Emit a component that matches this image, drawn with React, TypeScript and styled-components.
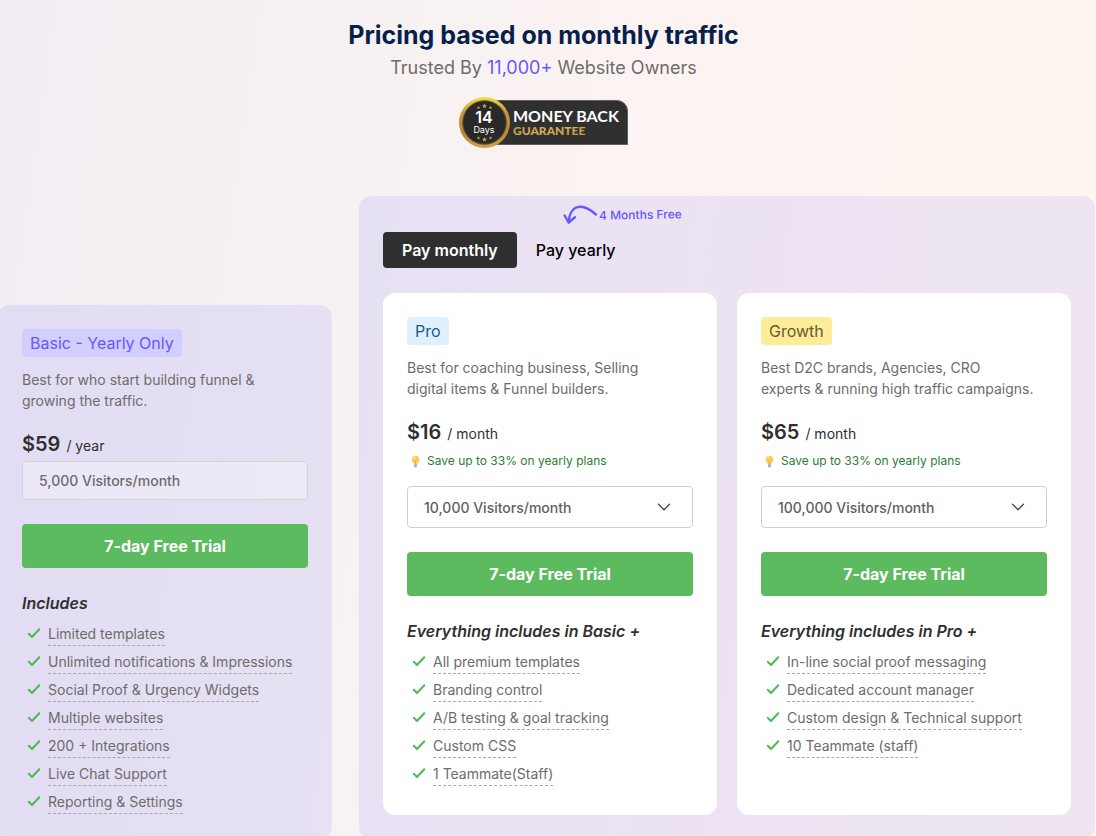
import React, { useState } from "react";
import styled, { createGlobalStyle } from "styled-components";

const GlobalStyle = createGlobalStyle`
  *, *::before, *::after { box-sizing: border-box; }
  body {
    margin: 0;
    font-family: Inter, "Liberation Sans", sans-serif;
    color: #2f2f2f;
    background: #fdf4f1;
  }
  h1, h2, h3, p, ul { margin: 0; padding: 0; }
  button, input, select { font-family: inherit; }
`;

const Page = styled.main`
  min-height: 100vh;
  overflow: hidden;
  background: linear-gradient(98deg, #f1edf3 0%, #f5f0f2 25%, #fbf3f2 48%, #fef4f1 72%, #fff7f0 100%);
`;

const Header = styled.header`
  display: flex;
  flex-direction: column;
  align-items: center;
  padding: 17px 9px 47px 0;
`;

const Title = styled.h1`
  font-size: 25px;
  line-height: 36px;
  font-weight: 700;
  color: #081f4b;
`;

const Subtitle = styled.p`
  margin: 3px 0 17px;
  font-size: 18px;
  line-height: 24px;
  color: #6c6c6c;
`;

const Accent = styled.span`
  color: #6658ff;
`;

const Plans = styled.section`
  display: grid;
  grid-template-columns: 334fr 736fr;
  gap: 27px;
  align-items: end;
  margin: 0 1px 0 -2px;
`;

const tint = "rgba(100, 94, 252, 0.11)";

const BasicPanel = styled.article`
  padding: 24px 24px 25px;
  border-radius: 12px;
  background: ${tint};
`;

const PaidPanel = styled.div`
  padding: 0 24px 24px;
  border-radius: 12px;
  background: ${tint};
`;

const Promo = styled.div`
  display: flex;
  height: 36px;
  padding: 8px 0 0 180px;
  color: #6658ff;
`;

const PromoText = styled.span`
  height: 22px;
  font-size: 12px;
  line-height: 22px;
  font-weight: 500;
  transform: rotate(-1deg);
`;

const Toggle = styled.div`
  display: flex;
  margin-bottom: 25px;
`;

const ToggleButton = styled.button<{ $active: boolean }>`
  height: 36px;
  padding: 0 19px;
  border: 0;
  border-radius: 4px;
  font-size: 16px;
  font-weight: ${(p) => (p.$active ? 600 : 500)};
  color: ${(p) => (p.$active ? "#ffffff" : "#000000")};
  background: ${(p) => (p.$active ? "#2f2f2f" : "transparent")};
`;

const Cards = styled.div`
  display: grid;
  grid-template-columns: 1fr 1fr;
  gap: 20px;
`;

const Card = styled.article`
  padding: 24px 24px 29px;
  border-radius: 12px;
  background: #ffffff;
`;

const Badge = styled.h2<{ $bg: string; $fg: string }>`
  width: fit-content;
  padding: 0 8px;
  border-radius: 4px;
  font-size: 16px;
  line-height: 28px;
  font-weight: 400;
  color: ${(p) => p.$fg};
  background: ${(p) => p.$bg};
`;

const Description = styled.p`
  margin: 12px 0 19px;
  font-size: 14px;
  line-height: 21px;
  color: #6c6c6c;
`;

const Price = styled.p`
  margin-bottom: 1px;
  font-size: 20px;
  line-height: 28px;
  font-weight: 600;
`;

const Period = styled.span`
  margin-left: 6px;
  font-size: 14px;
  font-weight: 400;
`;

const Saving = styled.p`
  display: flex;
  align-items: center;
  gap: 6px;
  margin-bottom: 13px;
  padding-left: 3px;
  font-size: 12px;
  line-height: 24px;
  color: #2e7d32;
`;

const Field = styled.input`
  display: block;
  width: 100%;
  height: 39px;
  padding: 0 16px;
  border: 1px solid #d3d3d3;
  border-radius: 4px;
  font-size: 14px;
  font-weight: 500;
  color: #6c6c6c;
  background: rgba(255, 255, 255, 0.3);
`;

const SelectWrap = styled.div`
  position: relative;
  color: #4a4a4a;

  svg {
    position: absolute;
    top: 13px;
    right: 21px;
    pointer-events: none;
  }
`;

const Select = styled.select`
  display: block;
  width: 100%;
  height: 42px;
  padding: 0 16px;
  border: 1px solid #cfcfcf;
  border-radius: 4px;
  appearance: none;
  font-size: 14px;
  font-weight: 500;
  color: #606060;
  background: #ffffff;
`;

const TrialButton = styled.button`
  display: block;
  width: 100%;
  height: 44px;
  margin: 24px 0;
  border: 0;
  border-radius: 4px;
  font-size: 16px;
  font-weight: 700;
  color: #ffffff;
  background: #5cbb5e;
`;

const IncludesTitle = styled.h3`
  margin-bottom: 9px;
  font-size: 16px;
  line-height: 22px;
  font-weight: 600;
  font-style: italic;
`;

const FeatureList = styled.ul`
  display: grid;
  gap: 5px;
  padding-left: 5px;
  list-style: none;
`;

const Feature = styled.li`
  display: flex;
  gap: 7px;
  height: 23px;
`;

const FeatureText = styled.span`
  border-bottom: 1px dashed #a9a9a9;
  font-size: 14px;
  line-height: 21px;
  color: #6c6c6c;
`;

const CheckIcon = () => (
  <svg width="14" height="21" viewBox="0 0 14 21" fill="none" aria-hidden="true">
    <path d="M1.8 10.8 5 14 12.3 6.3" stroke="#50b955" strokeWidth="2" strokeLinecap="round" strokeLinejoin="round" />
  </svg>
);

const ChevronIcon = () => (
  <svg width="16" height="16" viewBox="0 0 16 16" fill="none" aria-hidden="true">
    <path d="m2.500 5.300 5.500 5.400 5.500-5.400" stroke="currentColor" strokeWidth="1.400" strokeLinecap="round" strokeLinejoin="round" />
  </svg>
);

const BulbIcon = () => (
  <svg width="11" height="13" viewBox="0 0 11 13" aria-hidden="true">
    <path d="M5.500.8C3.300.8 1.700 2.400 1.700 4.400c0 1.300.6 2 1.300 2.900.5.600.8 1.300.9 2h3.200c.1-.7.4-1.400.9-2 .7-.9 1.300-1.600 1.300-2.900C9.300 2.400 7.700.8 5.500.8Z" fill="#ffc951" />
    <path d="M3.600 3.500c.3-.8.900-1.200 1.600-1.200" stroke="#fff0bf" strokeWidth="1.200" strokeLinecap="round" fill="none" />
    <path d="M5.500 5.300V9" stroke="#f7ab3c" strokeWidth=".9" fill="none" />
    <path d="M4.100 9.300h2.800v1.900c0 .7-.5 1.200-1.400 1.200s-1.400-.5-1.400-1.200Z" fill="#a9a4b4" />
  </svg>
);

const CurvedArrow = () => (
  <svg width="36" height="22" viewBox="0 0 36 22" fill="none" stroke="currentColor" strokeWidth="2.400" strokeLinecap="round" strokeLinejoin="round" aria-hidden="true">
    <path d="M33 10.500C27.500 5.500 22 2.500 16.800 2.700 10.500 3 6.300 9 5.600 18.300" />
    <path d="M1.600 11.500 5.600 18.500 12 13.300" />
  </svg>
);

const star = "M0-2.400 .7-.8 2.400-.7 1.100.4 1.500 2 0 1.200-1.500 2-1.100.4-2.400-.7-.7-.8Z";

const GuaranteeBadge = () => (
  <svg width="170" height="52" viewBox="0 0 170 52" role="img" aria-label="14 days money back guarantee">
    <defs>
      <linearGradient id="ring" x1="0" y1="0" x2="0" y2="1">
        <stop offset="0" stopColor="#efe04a" />
        <stop offset="0.3" stopColor="#c9973a" />
        <stop offset="0.7" stopColor="#b98535" />
        <stop offset="1" stopColor="#d0a24a" />
      </linearGradient>
      <linearGradient id="gold" x1="0" y1="0" x2="1" y2="1">
        <stop offset="0" stopColor="#b98c3c" />
        <stop offset="0.5" stopColor="#d9ae55" />
        <stop offset="1" stopColor="#bd8f3e" />
      </linearGradient>
    </defs>
    <path d="M26 3.500H158a10.500 10.500 0 0 1 10.500 10.500V47.500H26Z" fill="#303030" stroke="#5f5f5f" />
    <circle cx="25.500" cy="25.500" r="25.500" fill="url(#ring)" />
    <circle cx="25.500" cy="25.500" r="21.800" fill="#292929" stroke="#665534" strokeWidth="1" />
    <g fill="#d2a548">
      <path d={star} transform="translate(25.500 9)" />
      <path d={star} transform="translate(19.500 10.500) scale(.7)" />
      <path d={star} transform="translate(31.500 10.500) scale(.7)" />
      <path d={star} transform="translate(25.500 42.500)" />
      <path d={star} transform="translate(19.500 41) scale(.7)" />
      <path d={star} transform="translate(31.500 41) scale(.7)" />
    </g>
    <g fontFamily="Inter, sans-serif">
      <text x="25" y="26" textAnchor="middle" fontSize="16" fontWeight="600" fill="#ffffff">14</text>
      <text x="25" y="36" textAnchor="middle" fontSize="9" fill="#ffffff">Days</text>
    </g>
    <g fontFamily="Lato, sans-serif">
      <text x="54" y="25" fontSize="16" fontWeight="700" fill="#ffffff">MONEY BACK</text>
      <text x="54" y="38" fontSize="12" fontWeight="900" fill="url(#gold)">GUARANTEE</text>
    </g>
  </svg>
);

const Features = ({ items }: { items: string[] }) => (
  <FeatureList>
    {items.map((item) => (
      <Feature key={item}>
        <CheckIcon />
        <FeatureText>{item}</FeatureText>
      </Feature>
    ))}
  </FeatureList>
);

interface Plan {
  name: string;
  bg: string;
  fg: string;
  lines: [string, string];
  price: string;
  visitors: string[];
  heading: string;
  features: string[];
}

const paidPlans: Plan[] = [
  {
    name: "Pro",
    bg: "#e0f0ff",
    fg: "#135e88",
    lines: ["Best for coaching business, Selling", "digital items & Funnel builders."],
    price: "$16",
    visitors: ["10,000 Visitors/month"],
    heading: "Everything includes in Basic +",
    features: ["All premium templates", "Branding control", "A/B testing & goal tracking", "Custom CSS", "1 Teammate(Staff)"],
  },
  {
    name: "Growth",
    bg: "#ffec99",
    fg: "#665b32",
    lines: ["Best D2C brands, Agencies, CRO", "experts & running high traffic campaigns."],
    price: "$65",
    visitors: ["100,000 Visitors/month"],
    heading: "Everything includes in Pro +",
    features: ["In-line social proof messaging", "Dedicated account manager", "Custom design & Technical support", "10 Teammate (staff)"],
  },
];

const basicFeatures = [
  "Limited templates",
  "Unlimited notifications & Impressions",
  "Social Proof & Urgency Widgets",
  "Multiple websites",
  "200 + Integrations",
  "Live Chat Support",
  "Reporting & Settings",
];

const PaidCard = ({ plan }: { plan: Plan }) => (
  <Card>
    <Badge $bg={plan.bg} $fg={plan.fg}>{plan.name}</Badge>
    <Description>
      {plan.lines[0]}
      <br />
      {plan.lines[1]}
    </Description>
    <Price>
      {plan.price}
      <Period>/ month</Period>
    </Price>
    <Saving>
      <BulbIcon />
      Save up to 33% on yearly plans
    </Saving>
    <SelectWrap>
      <Select aria-label={`${plan.name} monthly visitors`}>
        {plan.visitors.map((v) => (
          <option key={v}>{v}</option>
        ))}
      </Select>
      <ChevronIcon />
    </SelectWrap>
    <TrialButton type="button">7-day Free Trial</TrialButton>
    <IncludesTitle>{plan.heading}</IncludesTitle>
    <Features items={plan.features} />
  </Card>
);

export default function App() {
  const [yearly, setYearly] = useState(false);

  return (
    <Page>
      <GlobalStyle />
      <Header>
        <Title>Pricing based on monthly traffic</Title>
        <Subtitle>
          Trusted By <Accent>11,000+</Accent> Website Owners
        </Subtitle>
        <GuaranteeBadge />
      </Header>
      <Plans>
        <BasicPanel>
          <Badge $bg="#d2ceff" $fg="#6658ff">Basic - Yearly Only</Badge>
          <Description>
            Best for who start building funnel &amp;
            <br />
            growing the traffic.
          </Description>
          <Price>
            $59
            <Period>/ year</Period>
          </Price>
          <Field readOnly aria-label="Basic monthly visitors" value="5,000 Visitors/month" />
          <TrialButton type="button">7-day Free Trial</TrialButton>
          <IncludesTitle>Includes</IncludesTitle>
          <Features items={basicFeatures} />
        </BasicPanel>
        <PaidPanel>
          <Promo>
            <CurvedArrow />
            <PromoText>4 Months Free</PromoText>
          </Promo>
          <Toggle>
            <ToggleButton type="button" $active={!yearly} onClick={() => setYearly(false)}>
              Pay monthly
            </ToggleButton>
            <ToggleButton type="button" $active={yearly} onClick={() => setYearly(true)}>
              Pay yearly
            </ToggleButton>
          </Toggle>
          <Cards>
            {paidPlans.map((plan) => (
              <PaidCard key={plan.name} plan={plan} />
            ))}
          </Cards>
        </PaidPanel>
      </Plans>
    </Page>
  );
}
